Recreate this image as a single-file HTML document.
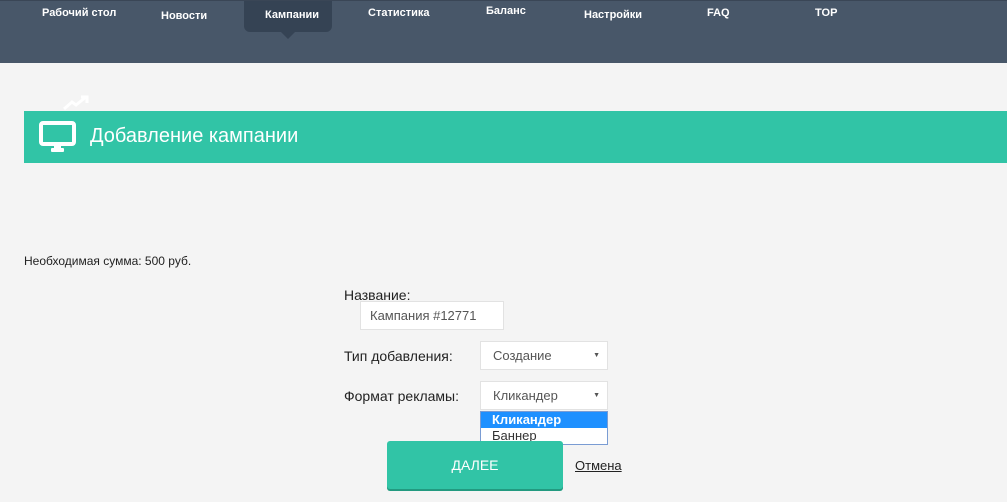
<!DOCTYPE html>
<html><head><meta charset="utf-8"><style>
body{margin:0;width:1007px;height:502px;background:#f4f4f4;font-family:"Liberation Sans",Arial,sans-serif;position:relative;overflow:hidden}
.nav{position:absolute;left:0;top:0;width:1007px;height:63px;background:#485769;border-top:1px solid #3a4656;box-sizing:border-box}
.nav span{position:absolute;color:#fff;font-size:11px;font-weight:bold}
.act{position:absolute;left:244px;top:0;width:88px;height:31px;background:#354354;border-radius:0 0 6px 6px}
.act:after{content:"";position:absolute;left:37px;top:31px;border:7px solid transparent;border-top:7px solid #354354;border-bottom:0}
.bar{position:absolute;left:24px;top:111px;width:989px;height:52px;background:#31c4a6}
.bar .t{position:absolute;left:66px;top:14px;color:#fff;font-size:20px}
.a{position:absolute;font-size:14px;color:#222}
.inp{position:absolute;background:#fff;border:1px solid #e2e2e2;box-sizing:border-box;font-size:13px;color:#555;padding-left:9px}
.arr{position:absolute;right:7px;top:0;font-size:7px;line-height:27px;color:#555}
</style></head><body>
<div class="nav">
<div class="act"></div>
<span style="left:42px;top:6px">Рабочий стол</span>
<span style="left:161px;top:9px">Новости</span>
<span style="left:265px;top:8px">Кампании</span>
<span style="left:368px;top:6px">Статистика</span>
<span style="left:486px;top:4px">Баланс</span>
<span style="left:584px;top:8px">Настройки</span>
<span style="left:707px;top:6px">FAQ</span>
<span style="left:815px;top:6px">TOP</span>
</div>
<svg style="position:absolute;left:62px;top:95px" width="28" height="16"><path d="M2 14 L10 7 L14 10 L24 2 M19 2 H25 V8" stroke="#fff" stroke-width="3" fill="none"/></svg>
<div class="bar">
<svg style="position:absolute;left:15px;top:10px" width="38" height="32"><rect x="2" y="2" width="33" height="21" rx="2" fill="none" stroke="#fff" stroke-width="4"/><rect x="15" y="24" width="7" height="4" fill="#fff"/><rect x="12" y="27" width="13" height="4" rx="1" fill="#fff"/></svg>
<div class="t">Добавление кампании</div>
</div>
<div class="a" style="left:24px;top:254px;font-size:12px">Необходимая сумма: 500 руб.</div>
<div class="a" style="left:344px;top:287px">Название:</div>
<div class="inp" style="left:360px;top:301px;width:144px;height:29px;line-height:27px">Кампания #12771</div>
<div class="a" style="left:344px;top:348px">Тип добавления:</div>
<div class="inp" style="left:480px;top:341px;width:128px;height:29px;line-height:27px;padding-left:12px">Создание<span class="arr">▼</span></div>
<div class="a" style="left:344px;top:388px">Формат рекламы:</div>
<div class="inp" style="left:480px;top:381px;width:128px;height:29px;line-height:27px;padding-left:12px">Кликандер<span class="arr">▼</span></div>
<div style="position:absolute;left:480px;top:411px;width:128px;height:34px;border:1px solid #7a9cd3;box-sizing:border-box;background:#fff;font-size:13px">
<div style="background:#1e90ff;color:#fff;height:16px;line-height:16px;padding-left:11px;font-weight:bold">Кликандер</div>
<div style="color:#333;height:16px;line-height:16px;padding-left:11px">Баннер</div></div>
<div style="position:absolute;left:387px;top:441px;width:176px;height:48px;background:#31c4a6;border-radius:3px;box-shadow:0 2px 0 #229a80;color:#fff;font-size:14px;text-align:center;line-height:48px">ДАЛЕЕ</div>
<div class="a" style="left:575px;top:458px;font-size:13px;text-decoration:underline">Отмена</div>
</body></html>
